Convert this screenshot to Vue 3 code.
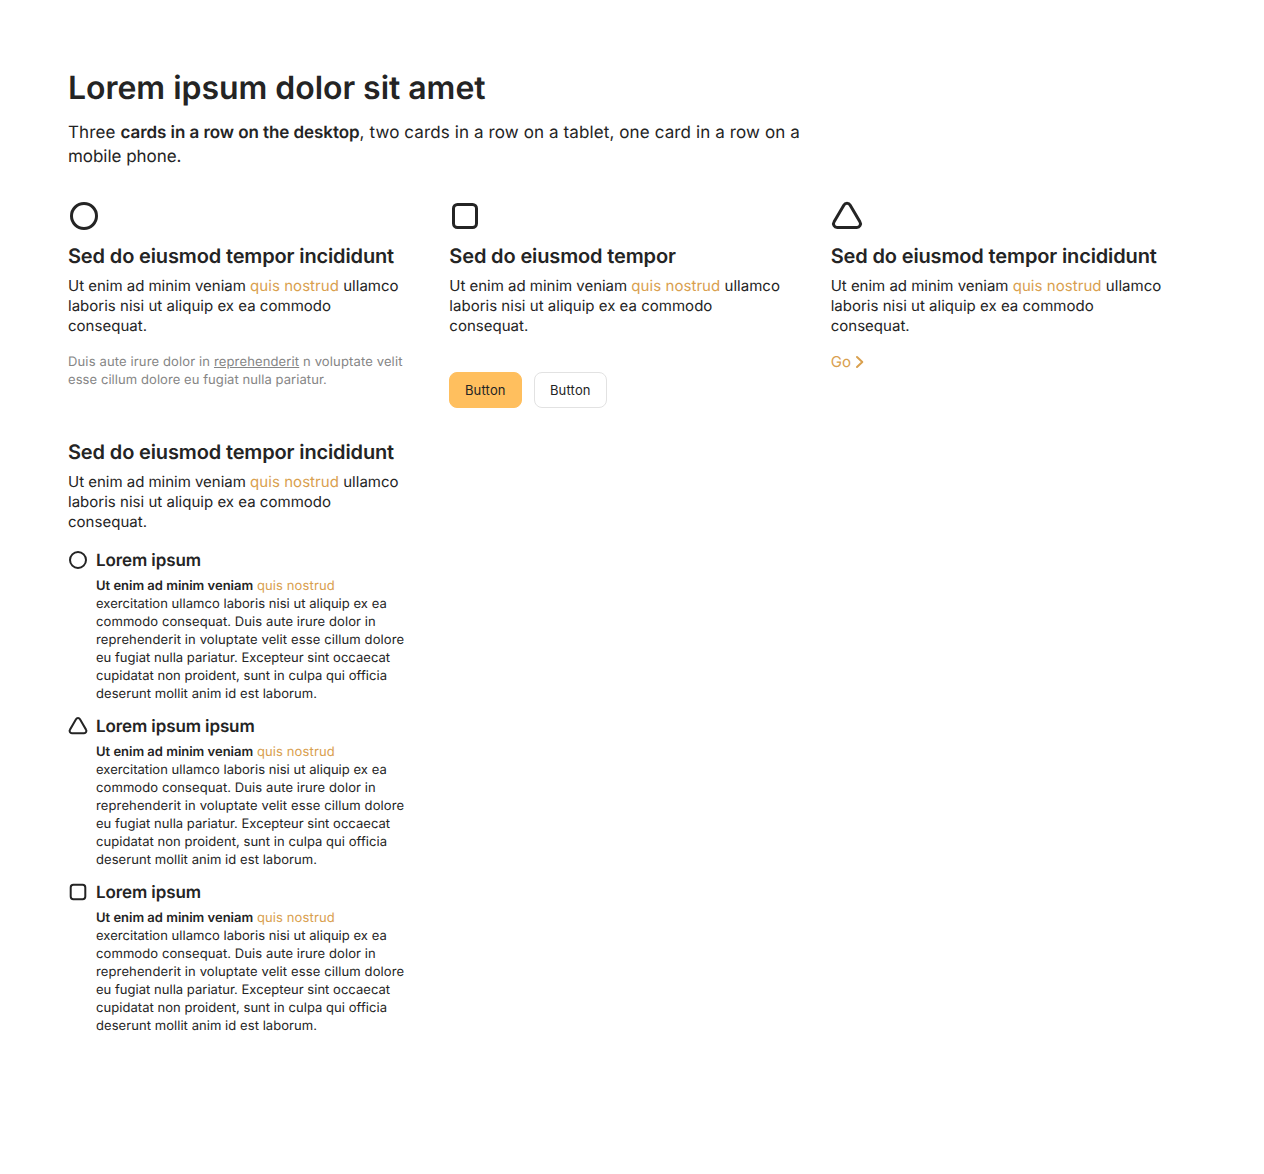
<script setup>
const items = [
  { icon: 'circle', title: 'Lorem ipsum' },
  { icon: 'triangle', title: 'Lorem ipsum ipsum' },
  { icon: 'square', title: 'Lorem ipsum' },
]
// Each line of body copy with its tracking in px
const lines = [
  { text: 'exercitation ullamco laboris nisi ut aliquip ex ea', tracking: 0.04 },
  { text: 'commodo consequat. Duis aute irure dolor in', tracking: 0.09 },
  { text: 'reprehenderit in voluptate velit esse cillum dolore', tracking: 0.12 },
  { text: 'eu fugiat nulla pariatur. Excepteur sint occaecat', tracking: 0.03 },
  { text: 'cupidatat non proident, sunt in culpa qui officia', tracking: 0.05 },
  { text: 'deserunt mollit anim id est laborum.', tracking: 0.06 },
]
const cards = [
  { icon: 'circle', title: 'Sed do eiusmod tempor incididunt', kind: 'note' },
  { icon: 'square', title: 'Sed do eiusmod tempor', kind: 'buttons' },
  { icon: 'triangle', title: 'Sed do eiusmod tempor incididunt', kind: 'go' },
  { icon: '', title: 'Sed do eiusmod tempor incididunt', kind: 'list' },
]
</script>

<template>
  <main class="page">
    <h1>Lorem ipsum dolor sit amet</h1>
    <p class="lead">Three <b>cards in a row on the desktop</b>, two cards in a row on a tablet, one card in a row on a <span class="tight">mobile phone.</span></p>
    <div class="grid">
      <section v-for="(c, i) in cards" :key="i" class="card">
        <svg v-if="c.icon" class="icon" viewBox="0 0 32 32">
          <circle v-if="c.icon === 'circle'" cx="16" cy="16" r="12.5" />
          <rect v-else-if="c.icon === 'square'" x="4.5" y="4.5" width="23" height="23" rx="4" />
          <path v-else d="M12.8 5.2 3.1 21.8A3.7 3.7 0 0 0 6.3 27.5H25.7A3.7 3.7 0 0 0 28.9 21.8L19.2 5.2A3.7 3.7 0 0 0 12.8 5.2Z" />
        </svg>
        <h2>{{ c.title }}</h2>
        <p class="text"><span class="start">Ut enim ad minim veniam </span><a>quis nostrud</a> ullamco laboris nisi ut aliquip ex ea commodo consequat.</p>
        <p v-if="c.kind === 'note'" class="note">Duis aute irure dolor in <u>reprehenderit</u> n voluptate velit <span class="end">esse cillum dolore eu fugiat nulla pariatur.</span></p>
        <div v-else-if="c.kind === 'buttons'" class="buttons">
          <button class="primary">Button</button>
          <button>Button</button>
        </div>
        <a v-else-if="c.kind === 'go'" class="go">Go<svg viewBox="0 0 10 14"><path d="M2 2 7.3 7 2 12" /></svg></a>
        <div v-else class="list">
          <div v-for="(it, k) in items" :key="k" class="item">
            <svg class="small" viewBox="0 0 20 20">
              <circle v-if="it.icon === 'circle'" cx="10" cy="10" r="8" />
              <rect v-else-if="it.icon === 'square'" x="2.7" y="2.7" width="14.6" height="14.6" rx="2.7" />
              <path v-else d="M8 3.2 2 13.6A2.3 2.3 0 0 0 4 17.2H16A2.3 2.3 0 0 0 18 13.6L12 3.2A2.3 2.3 0 0 0 8 3.2Z" />
            </svg>
            <div class="copy">
              <h3>{{ it.title }}</h3>
              <p><b>Ut enim ad minim veniam</b> <a>quis nostrud</a> <span v-for="(l, n) in lines" :key="n" class="line" :style="{ letterSpacing: l.tracking + 'px' }">{{ l.text }}</span></p>
            </div>
          </div>
        </div>
      </section>
    </div>
  </main>
</template>

<style>
body { margin: 0; background: #fff; }
</style>

<style scoped>
.page { box-sizing: border-box; min-height: 1174px; padding: 68px 68px 0; font-family: Inter, sans-serif; color: #242424; text-rendering: geometricPrecision; }
h1, h2, h3, p { margin: 0; }
h1, h2, h3, b { font-weight: 600; }
h1 { font-size: 32px; line-height: 40px; letter-spacing: -0.04px; }
.lead { width: 740px; margin-top: 13px; font-size: 17px; line-height: 24px; letter-spacing: 0.11px; }
.lead b { letter-spacing: -0.06px; }
.lead .tight { letter-spacing: -0.04px; }
a { color: #d9a04e; }
.grid { display: grid; grid-template-columns: repeat(3, 341.33px); column-gap: 40px; row-gap: 32px; margin-top: 31px; }
svg { fill: none; stroke: currentColor; }
.icon { display: block; width: 32px; height: 32px; margin-bottom: 12px; stroke-width: 3; }
h2 { font-size: 20px; line-height: 24px; letter-spacing: -0.14px; }
.text { margin-top: 8px; font-size: 15px; line-height: 20px; letter-spacing: 0.02px; }
.text .start { letter-spacing: -0.02px; }
.text a { letter-spacing: 0.06px; }
.note { margin-top: 17px; font-size: 13px; line-height: 18px; letter-spacing: 0.14px; color: #858585; }
.note .end { letter-spacing: 0.07px; }
.buttons { display: flex; gap: 12px; margin-top: 36px; }
button { width: 73px; height: 36px; padding: 0 1px 0 0; border: 1px solid #e2e2e2; border-radius: 8px; background: #fff; color: #242424; font: 13px/18px Inter, sans-serif; letter-spacing: 0.18px; }
.primary { border-color: #ffbf5e; background: #ffbf5e; }
.go { display: flex; align-items: center; margin-top: 16px; font-size: 15px; line-height: 20px; letter-spacing: 0.1px; }
.go svg { width: 10px; height: 14px; margin-left: 4px; stroke-width: 2; stroke-linecap: round; stroke-linejoin: round; }
.list { display: flex; flex-direction: column; gap: 12px; margin-top: 16px; }
.item { display: flex; gap: 8px; }
.small { flex: none; width: 20px; height: 20px; margin-top: 2px; stroke-width: 2; }
.copy { padding-top: 1px; margin-bottom: -1px; }
h3 { font-size: 17px; line-height: 24px; letter-spacing: -0.11px; }
.item p { margin-top: 4px; font-size: 13px; line-height: 18px; letter-spacing: 0.12px; }
.item b { letter-spacing: -0.01px; }
.line { display: block; white-space: nowrap; }
</style>
